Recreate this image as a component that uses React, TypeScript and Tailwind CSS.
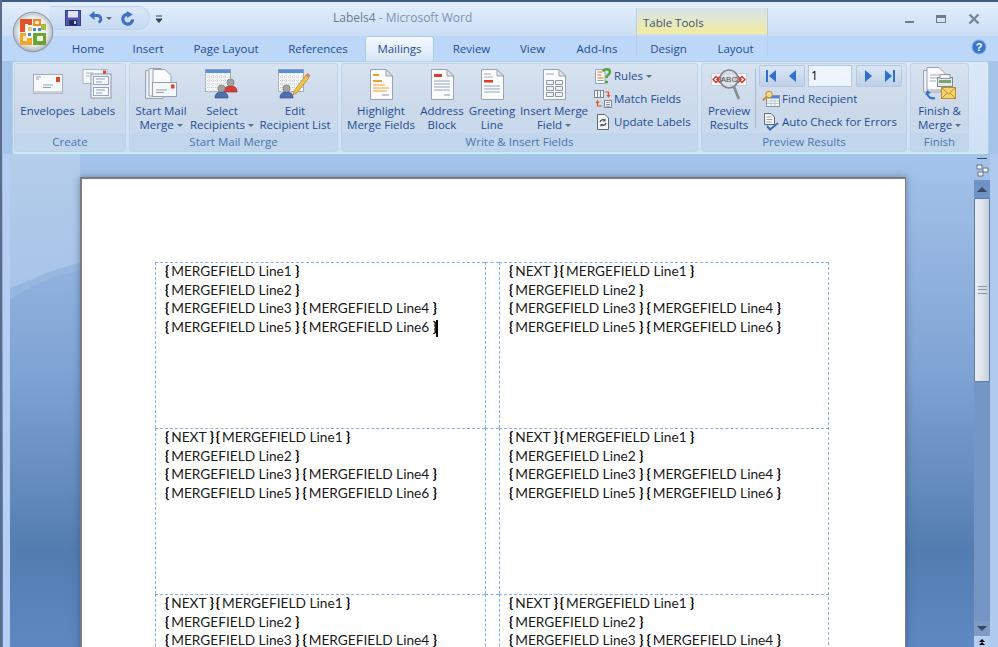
import React from "react";

const Doc = ({ children }: { children?: React.ReactNode }) => (
  <svg width="25" height="33" viewBox="0 0 25 33">
    <path d="M1.500 1.500H17L23.500 8V31.500H1.500Z" fill="#fbfbfc" stroke="#9aa3ae" />
    <path d="M17 1.500V8H23.500Z" fill="#dfe4ea" stroke="#9aa3ae" />
    {children}
  </svg>
);

const Envelope = () => (
  <svg width="32" height="24" viewBox="0 0 32 24">
    <rect x="1.500" y="2.500" width="29" height="19" fill="#f8f9fb" stroke="#a3abb6" />
    <rect x="1.500" y="19" width="29" height="2.500" fill="#c9d0d9" />
    <rect x="24" y="5" width="4" height="5" fill="#e0452c" />
    <path d="M4 5h5M4 7h3M11 13h10M11 15.500h8" stroke="#8c9fb8" fill="none" />
  </svg>
);

const LabelsIcon = () => (
  <svg width="32" height="32" viewBox="0 0 32 32">
    <rect x="1" y="1.500" width="24" height="14" fill="#f8f9fb" stroke="#aeb5bf" />
    <rect x="21" y="2.500" width="3" height="4" fill="#e0452c" />
    <path d="M4 5h7M4 8h4" stroke="#9db0c7" />
    <rect x="9" y="6" width="20" height="24" fill="#eef1f5" stroke="#8f99a6" />
    <rect x="11.500" y="8.500" width="15" height="8" fill="#f8fafc" stroke="#90a5bf" />
    <rect x="11.500" y="19.500" width="15" height="8" fill="#f8fafc" stroke="#90a5bf" />
    <path d="M14 11h9M14 14h6M14 22h9M14 25h6" stroke="#8aa0bc" />
  </svg>
);

const MergeIcon = () => (
  <svg width="34" height="34" viewBox="0 0 34 34">
    <path d="M1.500 3.500H14L19 8.500V31.500H1.500Z" fill="#e9ecf0" stroke="#9aa3ae" />
    <path d="M5 1.500H17L24 8V29H5Z" fill="#f4f5f7" stroke="#9aa3ae" />
    <path d="M9 2.500H21L27 8.500V27H9Z" fill="#fbfbfc" stroke="#9aa3ae" />
    <rect x="8.500" y="15.500" width="24" height="14" fill="#f5f7fa" stroke="#98a2ae" />
    <rect x="27" y="17.500" width="3.500" height="4" fill="#e0452c" />
    <path d="M12 23h11M12 25.500h8" stroke="#8c9fb8" />
  </svg>
);

const Person = ({ x, y, c, d }: { x: number; y: number; c: string; d: string }) => (
  <g transform={`translate(${x} ${y})`}>
    <path d="M0 14C0 9 3 8 6.500 8S13 9 13 14Z" fill={c} stroke={d} strokeWidth="0.600" />
    <circle cx="6.500" cy="4.500" r="3.600" fill="#a2a49f" stroke="#6f706c" strokeWidth="0.600" />
  </g>
);

const SheetGrid = () => (
  <g>
    <rect x="0.500" y="0.500" width="25" height="22" fill="#f5f6f8" stroke="#a6aeb8" />
    <rect x="0.500" y="0.500" width="25" height="3.500" fill="#5b8fd6" />
    <path
      d="M0 8h26M0 11.500h26M0 15h26M0 18.500h26M4 4v19M8 4v19M12 4v19M16 4v19M20 4v19"
      stroke="#c6ccd4"
      strokeDasharray="1 1"
    />
  </g>
);

const SelectIcon = () => (
  <svg width="34" height="30" viewBox="0 0 34 30">
    <SheetGrid />
    <Person x={19} y={9} c="#d6403c" d="#93231f" />
    <Person x={10} y={15} c="#4f6fb4" d="#2d4682" />
  </svg>
);

const EditIcon = () => (
  <svg width="34" height="30" viewBox="0 0 34 30">
    <SheetGrid />
    <Person x={2} y={15} c="#4f6fb4" d="#2d4682" />
    <path d="M16 22L28 6l3 2.500L19 24l-4 1.500Z" fill="#f0c44a" stroke="#a47f22" strokeWidth="0.700" />
    <path d="M28 6l1.500-2 3 2.500-1.500 2Z" fill="#e07a6c" />
  </svg>
);

const Small = ({ children }: { children: React.ReactNode }) => (
  <svg width="18" height="18" viewBox="0 0 18 18" className="shrink-0">
    {children}
  </svg>
);

const RulesIcon = () => (
  <Small>
    <path d="M1.500 2.500H11V16.500H1.500Z" fill="#fafafa" stroke="#9aa3ae" />
    <path d="M3.500 5h5M3.500 8h4M3.500 11h6" stroke="#e0722c" />
    <path d="M3.500 13.500h6" stroke="#8aa0bc" />
    <path d="M9 4.500C10 1.500 16 1.500 16 5c0 2.500-3.500 3-3.500 6" fill="none" stroke="#4fa53a" strokeWidth="2.400" />
    <circle cx="12.500" cy="15" r="1.600" fill="#4fa53a" />
  </Small>
);

const MatchIcon = () => (
  <Small>
    <rect x="0.500" y="0.500" width="9" height="7" fill="#f5f6f8" stroke="#7d8692" />
    <path d="M3.500 1v6M6.500 1v6" stroke="#7d8692" />
    <rect x="10.500" y="10.500" width="7" height="7" fill="#f5f6f8" stroke="#7d8692" />
    <path d="M12 12.500h4M12 14.500h4M12 16.300h4" stroke="#8e97a3" />
    <path d="M11 2h3.500v4M13 5l1.500 2 1.500-2" fill="none" stroke="#df5a28" strokeWidth="1.200" />
    <path d="M8 16H3.500v-4M2 13l1.500-2 1.500 2" fill="none" stroke="#df5a28" strokeWidth="1.200" />
  </Small>
);

const UpdateIcon = () => (
  <Small>
    <path d="M3.500 1.500H11L14.500 5V16.500H3.500Z" fill="#f5f6f8" stroke="#5f6873" />
    <path d="M6 9a3 3 0 0 1 5-1.500M12 10a3 3 0 0 1-5 1.500" fill="none" stroke="#4d5560" strokeWidth="1.300" />
    <path d="M11.500 5.500v3h-3ZM6.500 14v-3h3Z" fill="#4d5560" />
  </Small>
);

const FindIcon = () => (
  <Small>
    <rect x="4.500" y="5.500" width="13" height="11" fill="#f5f6f8" stroke="#8b95a2" />
    <rect x="5" y="6" width="12" height="2.500" fill="#4f86d2" />
    <path d="M5 11h12M5 13.500h12M9 8v8M13 8v8" stroke="#c2c8d0" />
    <circle cx="7" cy="4.500" r="3.300" fill="#f4d98a" stroke="#c08b2a" />
    <path d="M4.500 7L0.800 10.500" stroke="#d58c30" strokeWidth="2.200" />
  </Small>
);

const CheckIcon = () => (
  <Small>
    <path d="M2.500 0.500H9L12.500 4V11.500H2.500Z" fill="#f5f6f8" stroke="#5f6873" />
    <path d="M4.500 4h5M4.500 6.500h6M4.500 9h5" stroke="#9aa3ae" />
    <path d="M5 13L8 16.500 16 10" fill="none" stroke="#3f6fba" strokeWidth="2" />
  </Small>
);

const PreviewIcon = () => (
  <svg width="36" height="33" viewBox="0 0 36 33">
    <rect x="0.500" y="5.500" width="35" height="12" fill="#f6f6f6" stroke="#c8ced6" />
    <path d="M2 11.500l3-3 3 3-3 3ZM28 11.500l3-3 3 3-3 3Z" fill="none" stroke="#d1392c" strokeWidth="1.300" />
    <path d="M6 11.500l3-3 3 3-3 3ZM24 11.500l3-3 3 3-3 3Z" fill="none" stroke="#d1392c" strokeWidth="1.300" />
    <circle cx="18" cy="11" r="9" fill="#d4dbe3" fillOpacity="0.750" stroke="#7e858d" strokeWidth="1.600" />
    <text x="18" y="14" fontSize="8" textAnchor="middle" fill="#4b4f55" fontFamily="'Liberation Sans', sans-serif">ABC</text>
    <path d="M23 19L27.500 30" stroke="#8a8f95" strokeWidth="2.800" strokeLinecap="round" />
  </svg>
);

const FinishIcon = () => (
  <svg width="36" height="36" viewBox="0 0 36 36">
    <path d="M1.500 4.500H14L19 9.500V26H1.500Z" fill="#eceff3" stroke="#9aa3ae" />
    <path d="M5 1.500H17L23 7.500V24H5Z" fill="#fafbfc" stroke="#9aa3ae" />
    <path d="M8 9h9M8 12h9M8 15h6" stroke="#9db0c7" />
    <rect x="15.500" y="11.500" width="15" height="9" fill="#e3e6ea" stroke="#7f8791" />
    <rect x="18" y="8.500" width="10" height="4" fill="#f5f6f8" stroke="#8f97a1" />
    <rect x="17" y="14" width="12" height="3" fill="#7ea46e" />
    <path d="M5 27a6 6 0 0 0 8 5" fill="none" stroke="#3a6fc2" strokeWidth="2.200" />
    <path d="M3 29l2-5 4 3Z" fill="#3a6fc2" />
    <rect x="19.500" y="21.500" width="14" height="11" fill="#f4d36d" stroke="#b8922e" />
    <path d="M20 22l6.500 6 6.500-6M20 32l5-5M33 32l-5-5" fill="none" stroke="#b8922e" />
  </svg>
);

const OfficeLogo = () => (
  <svg width="42" height="42" viewBox="0 0 42 42">
    <defs>
      <radialGradient id="orb" cx="50%" cy="48%" r="55%">
        <stop offset="0%" stopColor="#ffffff" />
        <stop offset="62%" stopColor="#eef0f3" />
        <stop offset="84%" stopColor="#c4c9cf" />
        <stop offset="100%" stopColor="#8b9096" />
      </radialGradient>
    </defs>
    <circle cx="21" cy="21" r="19.800" fill="url(#orb)" stroke="#8d99a8" />
    <path d="M8 8h12v6h-4v-1h-3v8H8Z" fill="#e4522a" />
    <path d="M21 8h8v7h-8Z" fill="#ef8a28" />
    <rect x="23" y="10" width="4" height="3" fill="#fbe3c4" />
    <rect x="29" y="13" width="5" height="6" fill="#a8bd3e" />
    <path d="M8 22h6v5h6v7H8Z" fill="#f2a62a" />
    <rect x="11" y="25" width="4" height="5" fill="#fbeec6" />
    <rect x="16" y="16" width="4" height="4" fill="#f4c36a" />
    <rect x="21" y="17" width="3" height="3" fill="#3f8ad0" />
    <rect x="26" y="17" width="3" height="3" fill="#3f8ad0" />
    <rect x="16" y="22" width="3" height="3" fill="#3f8ad0" />
    <rect x="21" y="22" width="13" height="12" fill="#6aa533" />
    <rect x="25" y="25" width="6" height="5" fill="#eef4e2" />
  </svg>
);

const Floppy = () => (
  <svg width="16" height="16" viewBox="0 0 16 16">
    <rect x="0.500" y="0.500" width="15" height="15" fill="#5055b0" stroke="#3a3d8c" />
    <rect x="3" y="1" width="10" height="6.500" fill="#dfe3f5" />
    <rect x="4" y="10" width="8" height="5.500" fill="#2a2d55" />
    <rect x="9" y="11" width="2" height="3" fill="#c9cde0" />
  </svg>
);

const Undo = () => (
  <svg width="14" height="14" viewBox="0 0 14 14">
    <path d="M3 4.500h5.500a3.500 3.500 0 0 1 1 6.800" fill="none" stroke="#3f73c2" strokeWidth="2.800" />
    <path d="M5.500 0v9L0 4.500Z" fill="#3f73c2" />
  </svg>
);

const Redo = () => (
  <svg width="15" height="15" viewBox="0 0 14 14">
    <path d="M8.500 3.200a4.600 4.600 0 1 0 3.300 4.600" fill="none" stroke="#3f73c2" strokeWidth="3" />
    <path d="M6.500 0v6.500l5.500-3.200Z" fill="#3f73c2" />
  </svg>
);

const Caret = () => (
  <span className="ml-[3px] inline-block h-0 w-0 border-x-[3px] border-t-[3px] border-x-transparent border-t-[#5d6f88] align-middle" />
);

const Big = ({
  w,
  icon,
  a,
  b,
  caret,
}: {
  w: string;
  icon: React.ReactNode;
  a: string;
  b?: string;
  caret?: boolean;
}) => (
  <div className={`${w} flex shrink-0 flex-col items-center`}>
    <div className="flex h-[40px] items-center justify-center">{icon}</div>
    <div className="whitespace-nowrap text-center leading-[14px]">{a}</div>
    {b && (
      <div className="whitespace-nowrap text-center leading-[13px]">
        {b}
        {caret && <Caret />}
      </div>
    )}
  </div>
);

const Group = ({
  w,
  label,
  pl,
  children,
}: {
  w: string;
  label: string;
  pl: string;
  children: React.ReactNode;
}) => (
  <div className={`${w} flex h-[89px] shrink-0 flex-col overflow-hidden rounded-[3px] border border-[#c0d2e6] bg-gradient-to-b from-[#d8e2f0] via-[#cbd9ea] to-[#c9dbee]`}>
    <div className={`${pl} flex h-[70px]`}>{children}</div>
    <div className="flex h-[18px] items-center justify-center bg-[#c1d5ec] text-[#4a76ae]">{label}</div>
  </div>
);

const SmallRow = ({ icon, text, caret }: { icon: React.ReactNode; text: string; caret?: boolean }) => (
  <div className="flex h-[23px] items-center gap-[2px] whitespace-nowrap">
    {icon}
    <span>
      {text}
      {caret && <Caret />}
    </span>
  </div>
);

const Nav = ({ children }: { children: React.ReactNode }) => (
  <div className="flex h-[20px] w-[22px] items-center justify-center">
    <svg width="12" height="14" viewBox="0 0 12 14">
      {children}
    </svg>
  </div>
);

const NavPair = ({ children }: { children: React.ReactNode }) => (
  <div className="flex h-[22px] w-[46px] rounded-[2px] border border-[#b3c8e2] bg-gradient-to-b from-[#dbe6f4] to-[#bdd0e8]">
    {children}
  </div>
);

const Brace = ({ c }: { c: string }) => <span className="font-bold text-black">{c}</span>;

const Field = ({ n }: { n: number }) => (
  <>
    <Brace c="{" />
    <span className="ml-[2px]">MERGEFIELD Line{n} </span>
    <Brace c="}" />
  </>
);

const Cell = ({ next, caret }: { next?: boolean; caret?: boolean }) => (
  <div className="h-[166px] overflow-hidden border-t border-l border-dashed border-[#7fb0f0] pl-[9px] font-['Lato',sans-serif] text-[13.700px] leading-[18.600px] text-[#1a1a1a]">
    <div className="mt-[-1px] whitespace-pre">
      {next && (
        <>
          <Brace c="{" />
          <span className="ml-[2px]">NEXT </span>
          <Brace c="}" />
          <span className="ml-[2px]" />
        </>
      )}
      <Field n={1} />
    </div>
    <div className="whitespace-pre">
      <Field n={2} />
    </div>
    <div className="whitespace-pre">
      <Field n={3} />
      <span className="ml-[3px]" />
      <Field n={4} />
    </div>
    <div className="whitespace-pre">
      <Field n={5} />
      <span className="ml-[3px]" />
      <Field n={6} />
      {caret && <span className="ml-[-1px] inline-block h-[17px] w-[2px] bg-black align-middle" />}
    </div>
  </div>
);

const Gap = () => <div className="h-[166px] border-t border-l border-dashed border-[#7fb0f0]" />;

const tabs: [string, string][] = [
  ["Home", "w-[60px]"],
  ["Insert", "w-[60px]"],
  ["Page Layout", "w-[96px]"],
  ["References", "w-[88px]"],
];
const tabsAfter: [string, string][] = [
  ["Review", "w-[69px]"],
  ["View", "w-[53px]"],
  ["Add-Ins", "w-[76px]"],
  ["Design", "w-[67px]"],
  ["Layout", "w-[67px]"],
];

export default function App() {
  return (
    <div className="relative flex h-[647px] w-[998px] flex-col overflow-hidden bg-[linear-gradient(180deg,#a6c4ea_150px,#7fa3d4_370px,#6088b9_500px,#537cb0_550px,#5f88c2_647px)] font-['Open_Sans','Noto_Sans',sans-serif] text-[11.500px] text-[#1f4d93]">
      {/* Title bar */}
      <div className="flex h-[36px] shrink-0 items-center border-t-[2px] border-[#3e5c88] bg-gradient-to-b from-[#e3eefb] to-[#cbdef5] pl-[50px]">
        <div className="mt-[-2px] flex h-[24px] w-[100px] items-center gap-[8px] rounded-r-[12px] border border-l-0 border-[#c0d4ee] bg-gradient-to-b from-[#dbe8f8] to-[#c4d9f3] pl-[15px]">
          <Floppy />
          <div className="flex items-center">
            <Undo />
            <Caret />
          </div>
          <Redo />
        </div>
        <svg width="8" height="8" viewBox="0 0 8 8" className="ml-[5px]">
          <path d="M1 1h6M1 4h6L4 7.500Z" fill="#33445e" stroke="#33445e" />
        </svg>
        <div className="ml-[170px] mt-[-2px] whitespace-nowrap text-[12px] text-[#6a7d95]">
          Labels4 <span className="text-[#7b93b6]"> - Microsoft Word</span>
        </div>
        <div className="ml-auto mr-[18px] flex items-center gap-[22px]">
          <div className="h-[2px] w-[9px] translate-y-[3px] bg-[#6d7c90]" />
          <div className="h-[8px] w-[10px] border border-t-[3px] border-[#6d7c90]" />
          <svg width="12" height="12" viewBox="0 0 12 12">
            <path d="M1.500 1.500L10.500 10.500M10.500 1.500L1.500 10.500" stroke="#76869b" strokeWidth="2.400" />
          </svg>
        </div>
      </div>

      {/* Tabs */}
      <div className="flex h-[25px] shrink-0 items-end bg-[#bcd7f8] pl-[58px]">
        {tabs.map(([t, w]) => (
          <div key={t} className={`${w} flex h-[24px] items-center justify-center`}>
            {t}
          </div>
        ))}
        <div className="mx-[3px] flex h-[25px] w-[69px] items-center justify-center rounded-t-[3px] border border-b-0 border-[#a6cbe8] bg-gradient-to-b from-[#f4f9fe] to-[#d7e5f6]">
          Mailings
        </div>
        {tabsAfter.map(([t, w]) => (
          <div key={t} className={`${w} flex h-[24px] items-center justify-center`}>
            {t}
          </div>
        ))}
        <svg width="16" height="16" viewBox="0 0 16 16" className="mb-[6px] ml-[202px]">
          <circle cx="8" cy="8" r="7" fill="#3a76cf" stroke="#8cb0de" />
          <text x="8" y="12" textAnchor="middle" fontSize="11" fontWeight="700" fill="#fff" fontFamily="'Liberation Sans', sans-serif">?</text>
        </svg>
      </div>

      {/* Ribbon */}
      <div className="ml-[12px] flex h-[93px] w-[977px] shrink-0 gap-[3px] rounded-[3px] border border-b-2 border-[#a9d2e6] border-b-[#c4ecf2] bg-gradient-to-b from-[#dbe8f8] to-[#cfe0f5] p-[1px]">
        <Group w="w-[112px]" label="Create" pl="pl-[4px]">
          <Big w="w-[57px]" icon={<Envelope />} a="Envelopes" />
          <Big w="w-[44px]" icon={<LabelsIcon />} a="Labels" />
        </Group>
        <Group w="w-[209px]" label="Start Mail Merge" pl="pl-[2px]">
          <Big w="w-[58px]" icon={<MergeIcon />} a="Start Mail" b="Merge" caret />
          <Big w="w-[64px]" icon={<SelectIcon />} a="Select" b="Recipients" caret />
          <Big w="w-[82px]" icon={<EditIcon />} a="Edit" b="Recipient List" />
        </Group>
        <Group w="w-[357px]" label="Write & Insert Fields" pl="pl-[2px]">
          <Big
            w="w-[74px]"
            icon={
              <Doc>
                <rect x="4" y="6" width="6" height="2" fill="#f0a030" />
                <rect x="4" y="12" width="9" height="2" fill="#f0a030" />
                <path d="M4 17h12M4 20h16M4 23h14" stroke="#f0a030" />
                <path d="M13 27h7" stroke="#8a9ab0" />
              </Doc>
            }
            a="Highlight"
            b="Merge Fields"
          />
          <Big
            w="w-[48px]"
            icon={
              <Doc>
                <rect x="4" y="6" width="8" height="3" fill="#d8402a" />
                <path d="M4 13h16M4 16h16M4 19h16M4 22h16" stroke="#8fa4c4" />
                <path d="M14 27h6" stroke="#8a9ab0" />
              </Doc>
            }
            a="Address"
            b="Block"
          />
          <Big
            w="w-[52px]"
            icon={
              <Doc>
                <path d="M4 6h7M4 9h9" stroke="#a0acba" />
                <rect x="4" y="12" width="9" height="2.500" fill="#d8402a" />
                <path d="M4 18h16M4 21h16M4 24h16" stroke="#8fa4c4" />
              </Doc>
            }
            a="Greeting"
            b="Line"
          />
          <Big
            w="w-[72px]"
            icon={
              <Doc>
                <path d="M4 6h8" stroke="#a0acba" />
                <path d="M4.500 12.500h7v4h-7ZM13.500 12.500h7v4h-7ZM4.500 18.500h7v4h-7ZM13.500 18.500h7v4h-7ZM4.500 24.500h7v4h-7ZM13.500 24.500h7v4h-7Z" fill="#eef1f5" stroke="#8e99a8" />
              </Doc>
            }
            a="Insert Merge"
            b="Field"
            caret
          />
          <div className="pl-[4px]">
            <SmallRow icon={<RulesIcon />} text="Rules" caret />
            <SmallRow icon={<MatchIcon />} text="Match Fields" />
            <SmallRow icon={<UpdateIcon />} text="Update Labels" />
          </div>
        </Group>
        <Group w="w-[206px]" label="Preview Results" pl="pl-[2px]">
          <Big w="w-[50px]" icon={<PreviewIcon />} a="Preview" b="Results" />
          <div className="my-[5px] ml-[1px] mr-[3px] w-px bg-[#a6b9d0]" />
          <div>
            <div className="flex h-[23px] items-center gap-[3px]">
              <NavPair>
                <Nav>
                  <path d="M1 1h2v12H1ZM11 1v12L4 7Z" fill="#2f6fd0" />
                </Nav>
                <Nav>
                  <path d="M9 1v12L2 7Z" fill="#2f6fd0" />
                </Nav>
              </NavPair>
              <div className="flex h-[22px] w-[44px] items-center border border-[#b3c8e2] bg-[#eef4fc] pl-[2px] text-[12px] text-black">1</div>
              <div className="ml-[1px]">
                <NavPair>
                  <Nav>
                    <path d="M3 1v12L10 7Z" fill="#2f6fd0" />
                  </Nav>
                  <Nav>
                    <path d="M11 1h-2v12h2ZM1 1v12L8 7Z" fill="#2f6fd0" />
                  </Nav>
                </NavPair>
              </div>
            </div>
            <div className="pl-[3px]">
              <SmallRow icon={<FindIcon />} text="Find Recipient" />
              <SmallRow icon={<CheckIcon />} text="Auto Check for Errors" />
            </div>
          </div>
        </Group>
        <Group w="w-[59px]" label="Finish" pl="pl-0">
          <Big w="w-[57px]" icon={<FinishIcon />} a="Finish &" b="Merge" caret />
        </Group>
      </div>

      {/* Document area */}
      <div className="flex min-h-0 flex-1 pl-[3px] pt-[23px]">
        <div className="mt-[-23px] w-[7px] shrink-0 bg-[#b5cef2]" />
        <div className="relative z-10 ml-[70px] h-[700px] w-[826px] shrink-0 border-2 border-b-0 border-r border-[#7c7c7c] bg-white pl-[73px] pt-[83px] shadow-[0_0_7px_rgba(40,70,110,0.5)]">
          <div className="grid w-[674px] grid-cols-[330px_14px_330px] border-r border-dashed border-[#7fb0f0]">
            <Cell caret />
            <Gap />
            <Cell next />
            <Cell next />
            <Gap />
            <Cell next />
            <Cell next />
            <Gap />
            <Cell next />
          </div>
        </div>
        <div className="ml-[68px] mt-[-23px] flex w-[16px] shrink-0 flex-col">
          <div className="flex h-[26px] flex-col items-center">
            <div className="mt-[4px] h-[1px] w-[10px] bg-[#3b4a5e]" />
            <svg width="13" height="13" viewBox="0 0 13 13" className="mt-[5px]">
              <path d="M1 1h5v4H1ZM7 4h5v4H7ZM2 8h5v4H2Z" fill="#f0f3f7" stroke="#6a7686" />
            </svg>
          </div>
          <div className="flex h-[18px] items-center justify-center bg-[#6f92c4]">
            <div className="h-0 w-0 border-x-[5px] border-b-[5px] border-x-transparent border-b-[#39485c]" />
          </div>
          <div className="flex h-[184px] shrink-0 items-center justify-center rounded-[1px] border border-[#5d7ba5] bg-gradient-to-r from-[#e9edf3] via-[#dde3ea] to-[#c4ced9]">
            <div className="h-[8px] w-[9px] border-y border-[#8a96a6] bg-[linear-gradient(180deg,transparent_2px,#8a96a6_2px,#8a96a6_3px,transparent_3px)]" />
          </div>
          <div className="min-h-0 flex-1 bg-[#7596c5]" />
          <div className="flex h-[15px] items-center justify-center bg-[#7d9bc4]">
            <div className="h-0 w-0 border-x-[5px] border-t-[5px] border-x-transparent border-t-[#39485c]" />
          </div>
          <div className="flex h-[11px] flex-col items-center justify-start bg-[#b3cdf3] pt-[3px]">
            <div className="h-0 w-0 border-x-[3px] border-b-[3px] border-x-transparent border-b-black" />
            <div className="h-0 w-0 border-x-[3px] border-b-[3px] border-x-transparent border-b-black" />
          </div>
        </div>
        <div className="mt-[-23px] w-[8px] bg-[#b0c9ef]" />
      </div>

      {/* Left window edge */}
      <div className="absolute left-0 top-0 h-full w-[2px] bg-[#5a6d88]" />

      {/* Wave in the workspace backdrop */}
      <svg width="70" height="146" viewBox="0 0 70 146" className="absolute left-[10px] top-[154px]">
        <defs>
          <linearGradient id="wave" x1="0" y1="0" x2="0" y2="1">
            <stop offset="0%" stopColor="#b4cdea" />
            <stop offset="100%" stopColor="#a7c3e8" />
          </linearGradient>
        </defs>
        <path d="M0 135C20 126 45 114 70 109V146H0Z" fill="#9ab9e0" fillOpacity="0" />
        <path d="M0 146C20 132 45 120 70 117V109C45 114 20 126 0 135Z" fill="#9ab9e0" fillOpacity="0.700" />
        <path d="M0 0H70V109C45 114 20 126 0 135Z" fill="url(#wave)" />
      </svg>

      {/* Office button */}
      <div className="absolute left-[12px] top-[11px]">
        <OfficeLogo />
      </div>

      {/* Contextual tab highlight */}
      <div className="absolute left-[636px] top-[8px] h-[48px] w-[132px] border-x border-[#bdcde0]">
        <div className="flex h-[26px] items-end bg-gradient-to-b from-[#d7e3ee] to-[#f2ec9c] pb-[3px] pl-[6px] text-[11.500px] text-[#40536e]">
          Table Tools
        </div>
      </div>
    </div>
  );
}
